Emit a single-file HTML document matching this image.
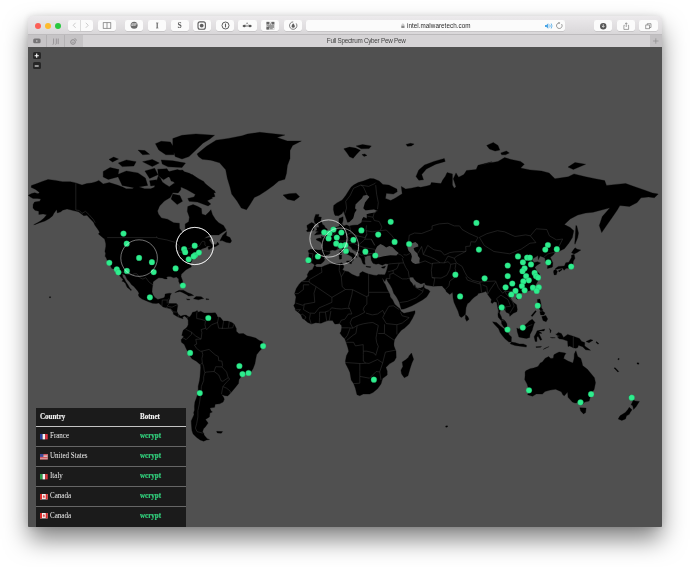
<!DOCTYPE html>
<html><head><meta charset="utf-8">
<style>
html,body{margin:0;padding:0;width:690px;height:567px;overflow:hidden;background:#fff;font-family:"Liberation Sans",sans-serif;}
.a{position:absolute;}
.shadow{left:28px;top:15.5px;width:634px;height:511.2px;border-radius:4px 4px 1.5px 1.5px;box-shadow:0 13px 24px -1px rgba(0,0,0,0.5),0 0 7px rgba(0,0,0,0.13);background:linear-gradient(#e4e2e4 0,#e4e2e4 31px,#505050 31px);}
.toolbar{left:28px;top:15.5px;width:634px;height:18.8px;background:linear-gradient(#eceaec,#d9d7d9);border-radius:4px 4px 0 0;}
.tbline{left:28px;top:34.1px;width:634px;height:0.5px;background:#bdbbbd;}
.tabbar{left:28px;top:34.5px;width:634px;height:12px;background:#d6d4d6;}
.pin{top:34.5px;height:12px;background:#c6c4c6;}
.pinsep{top:34.5px;height:12px;width:0.6px;background:#b4b2b4;}
.content{left:28px;top:46.5px;width:634px;height:480.2px;background:#505050;border-radius:0 0 1.5px 1.5px;}
.light{top:22.7px;width:6px;height:6px;border-radius:50%;}
.btn{top:20.2px;height:10.6px;background:#fbfbfb;border-radius:2px;box-shadow:0 0.4px 0.6px rgba(0,0,0,0.18);}
.ico{color:#6a6a6a;font-size:7px;text-align:center;line-height:10.6px;font-weight:bold;}
.title{left:326.8px;top:37.1px;font-size:6.3px;letter-spacing:-0.25px;color:#444;white-space:nowrap;}
.map{position:absolute;left:0;top:0;}
.url{font-size:6.3px;color:#2a2a2a;letter-spacing:0.04px;white-space:nowrap;}

.zb{left:33.3px;width:7.4px;height:7.4px;background:#262626;border-radius:1.5px;}
.tbl{left:35.8px;top:407.9px;width:150.5px;height:118.8px;background:#1b1b1b;}
.hl{left:35.8px;width:150.5px;height:1.1px;background:#c4c4c4;}
.sl{left:35.8px;width:150.5px;height:1.2px;background:#666;}
.th{font-family:"Liberation Serif",serif;font-weight:bold;font-size:8px;color:#f2f2f2;white-space:nowrap;line-height:8px;transform:scaleX(0.875);transform-origin:0 0;-webkit-text-stroke:0.15px #f2f2f2;}
.td{font-family:"Liberation Serif",serif;font-size:8px;color:#f0f0f0;white-space:nowrap;line-height:8px;transform:scaleX(0.875);transform-origin:0 0;}
.tg{font-family:"Liberation Serif",serif;font-weight:bold;font-size:8px;color:#33d37e;white-space:nowrap;line-height:8px;transform:scaleX(0.875);transform-origin:0 0;-webkit-text-stroke:0.2px #33d37e;}
.flag{left:39.9px;width:7.7px;height:5.4px;}
</style></head><body>
<div style="filter:blur(0.4px);position:absolute;left:0;top:0;width:690px;height:567px;">
<div class="a shadow"></div>
<div class="a toolbar"></div>
<div class="a tbline"></div>
<div class="a tabbar"></div>
<div class="a pin" style="left:28px;width:18.3px"></div>
<div class="a pin" style="left:46.8px;width:17.4px"></div>
<div class="a pin" style="left:64.7px;width:18.1px"></div>
<div class="a pinsep" style="left:46.4px"></div>
<div class="a pinsep" style="left:64.3px"></div>
<div class="a pin" style="left:650.4px;width:11.6px;background:#c3c1c3"></div>
<div class="a content"></div>
<!-- traffic lights -->
<div class="a light" style="left:34.8px;background:#fc5f57;"></div>
<div class="a light" style="left:44.9px;background:#fdbb2e;"></div>
<div class="a light" style="left:54.9px;background:#29c840;"></div>
<!-- nav buttons -->
<div class="a btn" style="left:67.7px;width:25.1px;"></div>
<div class="a" style="left:80.4px;top:20.2px;width:0.5px;height:10.6px;background:#dcdcdc"></div>
<svg class="a" style="left:67.7px;top:20.2px" width="26" height="11" viewBox="0 0 26 11"><path d="M7.6 2.8 L5.2 5.3 L7.6 7.8 M17.8 2.8 L20.2 5.3 L17.8 7.8" fill="none" stroke="#b8b8b8" stroke-width="0.7"/></svg>
<div class="a btn" style="left:98.3px;width:17.8px;"></div>
<svg class="a" style="left:98.3px;top:20.2px" width="18" height="11" viewBox="0 0 18 11"><rect x="5.2" y="2.7" width="7.6" height="5.6" fill="none" stroke="#6f6f6f" stroke-width="0.7"/><line x1="9" y1="2.7" x2="9" y2="8.3" stroke="#6f6f6f" stroke-width="0.7"/></svg>
<!-- extension buttons -->
<div class="a btn" style="left:125.1px;width:18.2px;"></div>
<svg class="a" style="left:125.1px;top:20.2px" width="19" height="11" viewBox="0 0 19 11"><circle cx="9.1" cy="5.3" r="3.5" fill="#6b6b6b"/><text x="9.1" y="6.3" font-size="2.6" font-family="Liberation Sans" font-weight="bold" fill="#ddd" text-anchor="middle">ABP</text></svg>
<div class="a btn" style="left:148px;width:17.7px;"></div>
<svg class="a" style="left:148px;top:20.2px" width="18" height="11" viewBox="0 0 18 11"><path d="M9.2 2.9 V8.1" stroke="#666" stroke-width="1.2"/><path d="M8 2.9 H10.4 M8 8.1 H10.4" stroke="#666" stroke-width="0.6"/></svg>
<div class="a btn" style="left:170.8px;width:17.8px;"></div>
<div class="a ico" style="left:170.8px;top:21.1px;width:17.8px;font-family:'Liberation Serif',serif;font-size:7.6px;color:#555">S</div>
<div class="a btn" style="left:193.3px;width:17.4px;"></div>
<svg class="a" style="left:193.3px;top:20.2px" width="18" height="11" viewBox="0 0 18 11"><rect x="5" y="1.9" width="7.4" height="7.4" rx="2" fill="none" stroke="#5e5e5e" stroke-width="1.1"/><circle cx="8.7" cy="5.6" r="1.9" fill="#5e5e5e"/></svg>
<div class="a btn" style="left:215.8px;width:18.1px;"></div>
<svg class="a" style="left:215.8px;top:20.2px" width="19" height="11" viewBox="0 0 19 11"><circle cx="9.5" cy="5.5" r="3.5" fill="none" stroke="#5e5e5e" stroke-width="1"/><path d="M9.5 3.6 V7.4" stroke="#5e5e5e" stroke-width="1.1"/></svg>
<div class="a btn" style="left:238.3px;width:18.4px;"></div>
<svg class="a" style="left:238.3px;top:20.2px" width="19" height="11" viewBox="0 0 19 11"><circle cx="9.1" cy="3.3" r="0.7" fill="#7a7a7a"/><path d="M9.1 3.3 L6.3 6 M9.1 3.3 L12 6" stroke="#999" stroke-width="0.4"/><path d="M4.6 6 H13.8" stroke="#555" stroke-width="0.8"/><circle cx="6.3" cy="6" r="1.3" fill="#555"/><circle cx="12" cy="6" r="1.3" fill="#555"/></svg>
<div class="a btn" style="left:261px;width:17.8px;"></div>
<svg class="a" style="left:261px;top:20.2px" width="18" height="11" viewBox="0 0 18 11"><rect x="5.5" y="1.9" width="7.8" height="7.6" fill="#9a9a9a"/><rect x="5.50" y="1.90" width="1.56" height="1.52" fill="#eaeaea"/><rect x="8.62" y="1.90" width="1.56" height="1.52" fill="#eaeaea"/><rect x="5.50" y="3.42" width="1.56" height="1.52" fill="#eaeaea"/><rect x="7.06" y="3.42" width="1.56" height="1.52" fill="#eaeaea"/><rect x="10.18" y="3.42" width="1.56" height="1.52" fill="#eaeaea"/><rect x="11.74" y="3.42" width="1.56" height="1.52" fill="#eaeaea"/><rect x="5.50" y="6.46" width="1.56" height="1.52" fill="#eaeaea"/><rect x="7.06" y="7.98" width="1.56" height="1.52" fill="#eaeaea"/><rect x="11.74" y="7.98" width="1.56" height="1.52" fill="#eaeaea"/><rect x="5.5" y="1.9" width="2.6" height="2.6" fill="#666"/><rect x="10.7" y="1.9" width="2.6" height="2.6" fill="#666"/><rect x="5.5" y="6.9" width="2.6" height="2.6" fill="#666"/></svg>
<div class="a btn" style="left:283.6px;width:18px;"></div>
<svg class="a" style="left:283.6px;top:20.2px" width="18" height="11" viewBox="0 0 18 11"><path d="M12.2 3.4 A3.7 3.7 0 1 1 9.2 1.9" fill="none" stroke="#5e5e5e" stroke-width="0.8"/><path d="M9.2 3.2 Q11.3 5.6 10.9 6.6 A1.8 1.8 0 0 1 7.5 6.6 Q7.1 5.6 9.2 3.2Z" fill="#5e5e5e"/></svg>
<!-- address bar -->
<div class="a btn" style="left:306px;width:258.6px;"></div>
<svg class="a" style="left:399.5px;top:22.6px" width="6" height="6" viewBox="0 0 6 6"><rect x="1.3" y="2.6" width="3.2" height="2.4" fill="#8a8a8a"/><path d="M2 2.6 V1.8 A0.9 0.9 0 0 1 3.8 1.8 V2.6" fill="none" stroke="#8a8a8a" stroke-width="0.5"/></svg>
<div class="a url" style="left:407px;top:22.2px;">intel.malwaretech.com</div>
<svg class="a" style="left:544px;top:21.5px" width="10" height="8" viewBox="0 0 10 8"><path d="M1 3 H2.4 L4.3 1.3 V6.7 L2.4 5 H1 Z" fill="#4ba6e6"/><path d="M5.7 2.5 Q6.7 4 5.7 5.5 M7.2 1.5 Q8.8 4 7.2 6.5" fill="none" stroke="#4ba6e6" stroke-width="0.8"/></svg>
<svg class="a" style="left:554.5px;top:21.2px" width="9" height="9" viewBox="0 0 9 9"><path d="M6.6 3.1 A2.8 2.8 0 1 1 4.3 1.9" fill="none" stroke="#7a7a7a" stroke-width="0.75"/><path d="M3.6 0.9 L5.3 1.9 L3.7 3.1 Z" fill="#7a7a7a"/></svg>
<!-- right buttons -->
<div class="a btn" style="left:593.9px;width:18.5px;"></div>
<svg class="a" style="left:593.9px;top:20.5px" width="19" height="11" viewBox="0 0 19 11"><circle cx="9.25" cy="5.2" r="3.2" fill="#555"/><path d="M9.25 3.2 V6 M7.9 4.9 L9.25 6.4 L10.6 4.9" fill="none" stroke="#fff" stroke-width="0.7"/></svg>
<div class="a btn" style="left:616.7px;width:18.5px;"></div>
<svg class="a" style="left:616.7px;top:20.5px" width="19" height="11" viewBox="0 0 19 11"><path d="M7.6 4.3 H6.9 V8.4 H11.6 V4.3 H10.9" fill="none" stroke="#666" stroke-width="0.6"/><path d="M9.25 1.8 V6 M8.2 2.9 L9.25 1.8 L10.3 2.9" fill="none" stroke="#666" stroke-width="0.6"/></svg>
<div class="a btn" style="left:639.4px;width:18.4px;"></div>
<svg class="a" style="left:639.4px;top:20.5px" width="19" height="11" viewBox="0 0 19 11"><rect x="6.8" y="4" width="3.8" height="3.8" fill="none" stroke="#666" stroke-width="0.6"/><path d="M8.2 4 V2.7 H12 V6.5 H10.6" fill="none" stroke="#666" stroke-width="0.6"/></svg>
<!-- tab bar -->
<div class="a title">Full Spectrum Cyber Pew Pew</div>
<svg class="a" style="left:28px;top:34.5px" width="55" height="12" viewBox="0 0 55 12"><rect x="5.2" y="3.6" width="7.4" height="4.6" rx="1.5" fill="#767476"/><path d="M8.2 4.9 L10.1 5.9 L8.2 6.9Z" fill="#c8c6c8"/><path d="M25.6 3.5 V8.6 Q25.6 9.4 24.6 9.3 M28.3 3.5 V8.6 Q28.3 9.4 27.4 9.3 M30.2 3.5 V9.2" fill="none" stroke="#8a888a" stroke-width="0.8"/><circle cx="45" cy="7" r="2.3" fill="none" stroke="#8a888a" stroke-width="1"/><circle cx="45" cy="7.2" r="0.7" fill="#8a888a"/><path d="M46.4 3.6 Q48.6 3.7 48.4 5.8" fill="none" stroke="#8a888a" stroke-width="0.7"/></svg>
<svg class="a" style="left:650.4px;top:34.5px" width="12" height="12" viewBox="0 0 12 12"><path d="M5.8 3.3 V8.7 M3.1 6 H8.5" stroke="#8e8c8e" stroke-width="0.7"/></svg>
<svg class="map" width="690" height="567" viewBox="0 0 690 567">
<path d="M28.2 195.3L31.7 193.5L34.7 192.7L38.1 193.8L39.5 192.4L35.6 189.4L31.0 187.3L31.5 185.4L37.0 183.6L42.3 181.4L48.0 179.5L55.5 180.4L62.6 181.7L70.5 181.7L75.8 182.9L82.0 185.1L86.8 183.6L91.7 182.9L96.1 181.7L98.8 180.4L103.2 183.9L109.3 182.6L117.3 185.1L122.6 187.0L126.1 188.8L132.3 188.8L134.9 187.3L138.4 186.7L144.6 188.8L150.8 188.8L154.3 187.3L156.4 182.0L158.2 175.9L160.5 178.2L162.3 182.0L164.9 183.9L169.3 186.7L173.7 183.6L177.2 182.6L180.8 185.1L180.8 189.7L178.1 193.0L172.8 192.7L170.2 197.6L164.4 201.0L159.6 205.9L157.5 211.0L158.4 213.9L161.4 218.0L167.5 219.2L173.7 222.7L179.4 223.2L179.5 228.3L182.5 232.3L185.2 231.1L185.2 223.9L188.7 221.7L189.4 217.2L187.3 211.3L187.8 206.5L193.1 204.6L197.9 206.5L201.4 208.6L201.9 213.9L205.5 215.2L209.0 212.1L210.9 209.7L212.5 214.7L215.5 219.5L218.7 222.7L223.5 225.4L226.3 230.2L223.1 232.1L218.7 234.9L210.8 234.9L206.7 236.7L202.8 239.2L199.1 242.3L203.7 238.5L209.9 237.2L211.1 238.1L209.0 240.1L210.4 242.1L211.6 243.9L216.1 244.8L217.6 242.1L219.1 244.3L216.1 246.3L212.5 247.6L208.8 249.8L207.9 247.6L210.8 245.9L207.2 246.3L206.0 247.4L202.8 248.5L200.7 249.6L199.8 251.7L201.1 253.4L198.6 254.2L196.7 254.7L194.0 255.9L193.8 257.8L192.4 259.5L191.4 261.9L190.5 263.3L191.2 266.0L191.4 267.0L189.2 268.0L186.1 269.7L183.6 271.9L181.3 274.3L181.0 276.6L182.4 280.3L183.2 283.9L182.7 286.3L181.3 286.3L180.2 284.4L178.7 281.4L178.7 279.1L176.4 277.0L173.7 277.8L170.7 276.6L168.4 276.4L166.5 277.0L167.2 278.9L164.9 278.9L162.3 277.9L158.7 277.8L156.1 279.5L153.1 281.8L152.7 285.2L152.2 288.6L152.0 291.9L153.1 294.9L154.8 297.4L157.8 299.4L161.4 298.5L164.0 297.8L164.9 296.2L165.1 294.1L169.3 293.2L171.4 293.4L170.2 295.6L169.8 298.7L168.8 300.5L168.4 303.4L172.0 303.6L176.4 303.6L177.8 305.1L177.2 308.7L176.9 311.3L178.1 314.0L180.8 316.2L183.4 315.3L186.1 315.1L188.2 316.5L189.6 317.0L191.2 314.9L192.6 312.2L195.2 311.7L197.2 310.6L198.4 312.2L200.7 311.2L204.1 313.1L207.8 312.9L211.6 312.9L215.3 312.8L216.9 314.9L217.3 316.7L220.5 317.6L223.1 321.1L227.5 321.1L231.9 322.4L234.2 324.3L236.3 328.5L236.3 331.2L239.0 333.8L243.4 333.5L246.9 335.8L251.3 336.8L255.7 338.1L259.3 340.4L262.4 341.4L263.2 345.0L262.3 348.2L259.3 351.2L256.6 354.8L255.7 359.3L254.9 363.8L253.1 368.4L250.5 372.8L246.0 373.4L241.6 376.0L239.0 379.6L238.5 383.4L235.5 387.2L232.8 390.5L230.2 393.5L227.7 395.9L224.9 395.7L221.5 394.5L223.5 397.1L224.3 399.3L223.1 402.1L219.6 403.8L215.2 404.2L214.6 407.3L209.9 408.1L211.1 411.1L212.4 411.9L209.9 413.0L209.4 416.9L205.5 419.5L208.1 423.1L205.3 426.9L203.5 428.8L202.6 431.8L203.9 433.7L204.1 435.1L207.2 438.7L209.5 439.5L206.4 440.0L203.7 441.2L200.2 440.0L196.7 437.5L193.1 433.9L191.9 430.4L191.4 424.7L191.2 420.9L194.0 414.7L193.7 412.6L194.5 410.0L194.4 406.3L194.9 402.1L196.5 397.7L198.2 392.1L198.2 386.3L199.5 380.5L200.0 376.7L200.7 367.8L200.5 364.7L198.6 363.3L196.7 361.4L191.9 358.7L189.9 355.8L188.4 353.0L186.1 348.5L184.3 344.4L181.5 342.3L181.1 339.8L182.9 337.7L183.6 336.1L181.8 335.6L182.5 332.6L183.2 330.3L185.5 328.5L187.1 327.0L188.2 324.7L188.2 320.2L187.3 318.5L186.1 317.2L184.3 316.0L182.5 317.6L183.1 318.8L180.8 318.1L178.1 317.0L177.1 316.5L173.4 314.2L173.2 312.2L170.5 308.8L168.4 308.3L166.1 307.8L163.1 306.9L161.7 305.8L158.7 303.1L156.1 303.6L152.6 303.3L148.5 301.8L145.5 300.4L142.0 299.1L139.3 296.9L138.3 295.0L139.0 293.2L137.9 291.2L136.0 288.9L133.7 286.3L131.6 284.8L129.6 282.0L127.2 279.5L125.0 274.9L122.2 273.7L122.9 277.2L124.3 278.7L125.7 281.6L127.9 284.8L129.8 288.2L131.6 289.9L130.7 290.6L130.0 289.5L127.3 287.4L126.6 286.3L125.4 283.3L123.3 281.4L121.9 281.2L123.1 279.7L120.3 276.6L118.7 273.7L117.8 272.1L115.9 269.9L114.6 269.2L111.8 268.4L109.7 264.3L108.5 262.1L107.2 260.3L106.2 257.8L105.1 256.3L105.6 253.4L104.9 251.3L105.8 246.5L105.8 243.7L104.6 239.0L103.2 237.9L98.4 233.9L99.6 232.6L98.8 230.7L94.9 225.2L93.5 222.2L89.9 218.5L86.9 215.2L83.8 215.7L78.5 211.8L73.2 210.5L67.0 208.9L62.6 210.2L60.8 211.8L57.3 212.9L56.8 209.4L59.1 207.6L56.1 210.2L53.8 213.4L52.5 215.9L49.4 218.5L45.0 221.0L39.7 222.7L35.3 224.4L33.7 224.7L37.0 223.0L40.5 221.0L44.1 218.0L46.7 214.7L43.2 213.9L38.8 214.4L38.8 211.3L34.9 210.2L33.0 208.1L33.1 204.6L34.5 202.1L39.7 201.3L40.9 199.0L37.4 198.4L33.0 198.4L30.8 197.3ZM208.1 205.9L202.8 204.0L197.5 202.1L189.1 201.3L187.8 198.4L194.0 197.0L196.3 192.7L194.0 190.3L186.1 188.2L181.7 183.3L176.4 182.0L171.1 181.1L168.4 172.9L174.6 171.2L182.5 169.9L186.1 173.6L192.2 174.6L198.4 178.8L203.7 181.4L208.1 188.2L214.3 190.6L215.5 192.7L207.2 193.5L212.5 198.2L207.2 200.7L210.8 204.0ZM172.8 194.1L179.9 195.6L182.5 201.3L177.2 204.6L171.1 199.0ZM219.9 240.8L222.6 235.6L226.6 231.6L226.3 235.8L230.0 237.6L231.6 241.0L230.2 243.0L226.1 242.3L222.2 240.6ZM174.8 292.5L179.0 290.2L183.4 290.2L187.8 292.7L191.4 294.1L193.7 295.6L188.4 296.1L187.3 294.9L182.5 292.5L179.9 291.4L176.4 292.3ZM193.5 298.7L196.1 296.5L201.1 296.7L203.7 298.5L201.1 299.1L198.4 299.8L194.9 299.1ZM186.4 298.9L189.9 299.3L189.9 299.8L187.8 300.0ZM206.0 298.7L208.8 298.9L208.8 299.6L206.0 299.6ZM314.7 265.4L313.4 263.7L311.5 262.9L308.8 263.3L309.0 259.9L307.8 258.4L308.8 256.8L309.0 253.0L308.1 250.8L310.4 249.3L314.3 249.6L317.8 250.0L321.4 250.0L322.4 247.4L322.4 245.0L320.7 241.9L316.6 240.1L316.2 239.0L319.2 238.1L321.7 238.5L321.2 236.0L322.8 236.9L324.9 236.5L327.4 234.9L328.9 232.8L331.6 232.1L332.7 229.5L333.9 227.6L336.9 227.1L339.7 226.1L338.8 222.0L339.0 218.5L343.1 216.7L343.1 220.5L342.0 223.9L343.9 225.9L346.6 224.7L349.2 226.1L352.8 225.2L357.7 224.9L359.8 223.7L361.9 222.0L361.6 218.5L363.3 217.0L366.9 218.5L366.9 214.7L366.0 212.9L368.1 212.1L373.9 212.1L378.0 211.0L373.9 209.2L368.6 210.0L364.2 210.8L362.3 208.6L362.3 204.0L365.1 200.1L369.5 197.0L366.9 194.7L363.3 195.6L361.6 198.4L358.1 201.8L355.4 204.6L354.9 208.4L357.5 210.8L357.2 212.6L354.2 215.4L353.6 218.5L352.6 220.7L349.8 222.2L347.3 222.2L346.9 220.5L345.5 216.7L344.3 213.4L343.2 211.0L342.2 213.4L338.6 215.7L335.1 215.4L334.2 213.4L333.4 209.4L333.7 205.4L336.9 202.9L342.2 199.9L345.7 195.6L348.4 191.2L351.0 187.3L353.6 185.1L358.1 182.6L363.3 181.1L370.0 178.5L373.9 178.8L379.2 181.1L382.9 184.5L388.9 185.1L396.9 189.1L397.2 191.8L393.3 194.1L386.3 193.3L385.4 198.4L390.7 200.4L395.1 198.2L402.2 193.8L401.3 186.4L405.7 189.1L411.0 188.2L418.0 186.7L420.7 187.3L426.8 186.0L430.4 185.1L431.4 182.6L441.0 183.6L442.7 180.1L445.4 176.2L447.1 172.6L452.4 173.9L452.4 185.1L454.2 188.2L456.0 186.7L453.3 178.8L456.0 172.9L458.6 177.2L463.9 174.6L466.5 170.5L476.2 169.5L478.0 165.3L492.1 161.8L479.1 166.1L488.5 163.3L498.0 161.4L504.6 157.6L511.2 159.5L520.6 161.4L524.3 164.2L520.6 168.0L530.0 169.9L541.5 171.0L549.1 173.0L554.9 178.7L568.3 176.8L574.0 173.9L585.5 176.8L595.0 178.7L604.6 180.6L606.5 185.4L616.1 184.4L625.7 183.5L633.3 186.3L644.8 190.2L652.4 193.0L658.2 194.0L654.4 197.8L648.6 196.9L641.0 197.8L637.1 202.6L629.5 206.4L619.9 205.5L619.9 205.5L617.1 210.3L612.3 217.3L606.5 225.6L601.7 232.6L599.3 225.6L602.3 216.6L610.0 207.8L593.1 212.2L585.5 213.1L577.8 215.0L570.2 218.9L564.4 224.6L570.2 227.5L573.8 230.7L572.4 237.6L568.8 243.2L564.4 248.7L559.1 251.3L557.2 250.6L555.1 252.3L553.3 255.1L550.3 257.2L552.8 262.7L552.6 266.4L552.1 267.2L548.6 268.2L547.3 268.4L547.7 265.4L548.2 262.1L545.4 261.5L545.0 258.2L543.8 257.4L540.1 256.1L538.3 259.7L538.0 255.5L532.7 258.8L532.3 260.7L534.3 262.5L537.4 261.7L540.6 262.9L536.7 265.4L534.8 267.6L537.1 271.3L539.6 273.9L538.9 276.2L539.7 277.6L537.6 281.4L535.3 285.8L532.7 287.8L530.0 290.4L525.6 291.7L522.1 292.8L519.5 294.1L518.9 295.4L518.0 293.2L515.9 293.0L513.3 294.5L511.5 296.9L510.8 298.7L513.3 302.3L516.5 304.7L517.3 309.6L516.8 311.7L513.3 313.3L509.8 316.3L509.4 313.7L506.2 312.2L505.0 310.1L502.5 307.9L501.8 307.8L500.8 309.2L499.5 313.1L501.3 316.7L502.0 319.3L503.6 319.7L505.0 320.8L506.9 323.8L507.1 326.8L508.3 329.2L507.1 329.4L503.6 326.8L501.6 323.8L501.5 321.1L498.3 317.2L497.9 314.9L498.3 310.4L496.9 303.6L496.7 302.3L494.2 301.8L492.1 303.6L490.9 302.3L491.4 299.6L489.5 296.9L487.7 294.5L486.8 292.7L485.9 291.2L484.2 292.1L481.5 292.7L478.0 293.6L477.6 295.0L474.5 296.9L471.8 299.6L469.5 302.2L467.4 303.8L466.0 307.8L465.5 313.5L464.4 315.3L462.5 316.7L461.2 317.4L459.5 316.0L458.1 311.3L456.1 306.9L454.0 302.3L453.0 297.8L452.8 294.1L452.4 292.3L449.8 294.5L446.3 291.7L445.7 289.9L443.3 287.6L442.2 285.9L437.4 286.1L433.2 286.3L428.3 285.6L425.6 285.0L424.4 282.7L421.0 283.9L416.3 281.4L414.1 279.1L413.1 277.2L410.1 277.2L409.2 278.1L410.1 281.0L412.0 283.1L414.1 286.7L414.9 284.6L415.6 287.6L418.0 288.2L420.7 288.0L423.3 286.7L423.8 285.4L424.0 284.4L424.2 287.8L426.0 288.9L428.3 289.7L430.0 291.4L427.9 295.0L426.5 297.1L422.4 300.0L416.6 303.3L411.9 305.8L406.6 307.9L403.9 309.0L401.3 309.2L399.9 304.5L399.3 302.3L396.5 296.9L393.7 293.2L392.1 288.6L390.3 285.2L387.7 281.4L386.1 278.1L384.9 281.6L382.0 277.4L381.5 274.7L384.9 274.7L386.3 271.5L387.2 268.4L387.9 265.6L388.4 264.1L385.4 263.7L382.4 265.2L378.5 263.7L376.0 264.3L373.0 263.3L371.3 260.3L370.9 257.2L370.8 255.9L370.4 255.3L366.9 255.7L366.0 256.8L364.4 256.1L364.9 258.6L364.8 261.7L365.3 264.3L363.9 264.3L362.8 263.3L361.9 260.7L361.1 258.6L358.8 256.3L358.9 253.4L357.2 251.9L352.8 249.8L351.4 247.6L348.5 245.2L346.2 245.7L346.6 248.3L348.5 249.8L350.1 252.6L353.1 253.2L354.5 255.1L357.2 257.0L357.0 257.6L354.7 256.1L353.6 259.2L352.9 261.3L352.1 260.9L352.4 257.2L349.8 255.5L346.6 254.0L343.9 251.9L343.1 249.8L340.4 247.8L337.8 249.1L335.1 250.6L332.5 250.0L329.8 250.8L330.2 253.2L328.1 254.7L326.1 255.1L324.0 258.2L324.9 259.7L323.3 262.1L320.8 263.9L316.8 263.9ZM315.0 265.6L316.6 267.0L320.1 267.0L321.9 267.0L324.5 265.8L329.8 263.7L334.2 263.9L339.5 263.5L342.0 262.7L343.1 264.3L343.9 267.0L342.5 269.7L344.8 270.9L348.4 271.7L351.9 274.3L357.2 276.6L359.5 276.2L359.8 273.3L362.5 271.5L366.0 273.1L368.6 274.1L373.9 275.2L376.6 275.4L378.3 274.5L381.5 274.7L382.0 277.4L383.6 282.0L385.4 284.8L387.3 289.5L389.8 294.1L390.3 296.9L392.5 299.6L394.7 304.2L397.7 306.9L399.9 308.7L400.9 311.3L403.9 313.3L411.0 311.7L415.0 310.8L415.0 313.1L412.4 318.5L409.2 323.8L404.4 328.2L401.3 330.3L397.7 334.7L394.4 339.7L393.9 343.7L394.0 345.9L396.0 351.2L396.2 357.5L394.2 361.1L389.5 363.8L385.9 367.5L387.2 371.1L387.2 374.9L382.6 378.6L381.0 383.9L377.5 388.8L373.0 392.5L369.7 394.1L363.3 394.1L359.8 395.7L357.0 394.7L356.3 392.1L355.4 388.2L353.6 383.6L351.2 380.1L349.9 372.4L348.5 369.3L345.7 363.8L345.4 361.1L346.4 355.7L348.7 351.2L347.8 347.6L346.1 342.3L344.8 338.8L342.2 336.3L339.9 333.1L340.9 331.7L341.8 327.8L341.5 325.5L339.5 323.6L336.9 323.9L334.8 324.1L332.5 320.6L328.1 320.6L324.5 321.8L321.0 323.2L315.7 322.7L311.3 324.1L307.8 322.4L304.6 319.7L302.5 318.5L300.7 314.4L298.1 312.2L295.1 309.9L295.3 308.7L293.7 305.6L294.9 303.8L295.4 300.5L296.0 296.9L294.6 293.6L296.3 288.6L299.0 284.4L301.6 281.6L305.1 279.7L307.6 276.4L307.3 274.5L309.5 270.7L312.5 269.4L313.4 267.4L314.3 265.8ZM525.8 370.8L530.0 368.7L533.6 368.0L538.0 366.5L540.3 362.9L542.4 362.0L545.0 358.4L548.6 356.6L550.7 358.4L553.3 358.2L553.9 354.8L556.5 353.3L559.1 352.1L565.3 353.0L565.8 353.5L564.4 355.7L563.6 358.4L568.0 361.1L572.9 362.9L574.1 358.4L574.3 353.9L575.9 350.7L577.7 356.6L580.8 358.4L582.1 362.9L582.6 365.6L587.4 369.3L590.5 373.0L594.4 377.7L595.5 382.8L594.2 389.2L591.2 393.9L589.1 401.1L584.7 402.1L582.6 404.4L579.4 402.5L575.0 403.0L572.4 402.1L570.6 400.1L568.0 397.3L567.6 392.1L564.4 395.7L563.0 395.1L561.3 391.7L555.6 389.2L550.3 390.1L545.0 391.5L542.4 394.1L536.2 393.9L532.5 396.3L527.6 394.7L528.6 392.7L528.6 389.2L527.2 384.3L524.7 379.6L525.1 375.8L525.1 372.1ZM316.6 232.6L318.9 232.1L315.4 231.1L317.1 230.0L316.6 227.6L319.2 227.3L318.7 225.4L318.4 223.7L316.1 223.9L314.7 222.7L314.0 219.7L314.7 217.2L315.7 214.4L319.1 214.4L318.4 216.7L321.4 217.2L320.7 220.2L321.7 222.0L322.4 224.2L324.4 225.7L325.1 227.6L327.5 229.3L325.9 231.4L327.0 232.6L322.8 233.7L318.4 234.6L314.5 235.1ZM313.4 230.2L310.4 231.4L307.3 231.8L306.4 230.7L307.8 229.3L307.1 227.3L306.9 225.4L309.5 223.7L311.7 222.5L314.8 223.9L313.8 226.1L314.0 230.2ZM568.0 167.1L575.0 162.5L585.6 164.3L573.3 169.5ZM574.7 243.2L575.0 239.9L575.4 233.0L575.9 225.4L576.8 225.9L578.5 233.0L577.7 237.6L575.0 244.3ZM574.1 254.5L575.0 258.2L573.3 261.3L572.9 265.4L571.1 267.4L569.4 268.2L566.2 268.2L564.1 270.3L562.7 268.2L559.1 268.8L555.6 269.4L555.4 268.6L558.3 266.4L564.4 266.0L565.8 262.7L568.8 262.3L571.5 257.6L571.5 255.1ZM553.9 270.3L555.6 269.6L557.4 271.3L556.3 274.7L554.2 274.9L553.5 271.9ZM558.3 270.7L561.8 269.0L562.1 269.7L559.1 271.9ZM539.6 286.5L538.9 291.0L537.6 292.5L536.4 290.4L537.1 287.6ZM516.1 297.4L518.9 295.8L520.3 296.7L517.7 299.3L516.3 298.7ZM518.6 328.7L521.4 327.1L525.3 324.7L527.4 323.1L529.2 321.1L532.3 319.3L535.0 322.5L534.1 323.8L532.7 328.2L532.2 330.3L530.0 334.4L529.7 337.5L526.5 338.4L522.1 337.7L518.9 337.0L517.3 331.7L516.8 328.2ZM492.6 321.8L496.5 322.5L500.9 326.4L503.6 328.5L507.6 330.8L508.9 334.4L511.5 337.0L511.2 342.0L508.9 342.1L505.0 338.8L502.7 336.1L500.1 332.6L498.6 328.7L496.5 326.6L493.9 323.8ZM510.1 343.7L511.5 342.1L515.6 342.8L519.3 343.9L523.3 343.9L526.5 345.3L526.3 347.1L520.3 346.2L515.0 345.5L512.2 344.6ZM534.1 336.7L536.2 333.1L537.1 330.7L544.1 331.0L544.7 329.1L538.3 330.8L542.0 333.3L539.0 333.5L541.9 339.7L540.3 340.2L538.2 336.5L536.9 336.8L536.9 341.6L535.2 341.4ZM556.0 334.4L558.3 332.4L561.3 333.5L563.6 337.5L567.6 334.4L573.3 336.3L579.4 338.4L581.7 341.4L584.7 342.5L584.7 345.9L588.2 348.5L590.5 350.3L585.6 349.8L582.6 346.7L578.5 345.3L577.7 347.6L575.9 348.2L573.3 347.8L569.7 346.0L568.0 346.6L567.6 341.1L562.7 339.3L559.1 338.8L557.4 336.8L560.0 336.1L557.4 335.6L555.6 334.2ZM465.5 314.4L467.9 316.7L469.0 319.3L466.7 321.3L465.3 318.5ZM411.5 353.0L413.6 359.3L411.9 362.9L410.1 368.4L408.0 375.8L404.3 377.7L401.6 373.9L400.9 370.2L402.9 366.5L402.2 362.0L405.7 359.8L408.3 357.5L409.2 355.7ZM629.2 395.1L632.3 398.1L634.8 400.9L639.4 401.5L637.6 404.2L636.4 406.3L633.6 409.4L632.7 405.8L631.1 404.8L632.9 401.1ZM629.2 407.3L632.0 409.8L630.1 412.6L629.3 414.3L626.5 415.8L625.5 418.9L621.8 420.4L618.2 419.1L620.0 415.8L625.3 412.6L627.9 409.4ZM579.8 407.7L586.1 408.1L585.6 412.6L583.5 413.9L580.7 410.9ZM346.4 261.1L352.1 260.7L351.2 263.9L346.8 262.1ZM339.0 255.1L341.8 254.9L341.5 259.0L339.4 259.2ZM339.7 251.1L341.3 250.8L341.3 254.0L340.1 254.0ZM366.0 266.2L370.9 266.8L370.4 267.4L366.2 267.0ZM381.5 267.2L385.6 266.0L384.3 268.2L381.9 268.0ZM545.0 348.2L549.1 346.6L543.3 349.4ZM535.9 346.7L541.5 346.4L540.6 347.3L536.2 347.5ZM550.3 337.4L555.3 337.7L552.1 338.1ZM549.4 328.5L551.2 330.8L550.3 333.1L550.0 330.3ZM197.0 154.1L206.5 146.3L216.1 140.2L228.3 138.4L242.2 135.8L247.4 134.1L259.6 132.3L284.8 135.0L277.0 137.6L287.4 141.0L301.3 141.0L292.6 145.4L290.0 150.6L290.0 158.4L287.4 165.4L286.5 173.2L284.8 179.3L278.7 181.0L273.5 185.4L266.5 190.6L259.6 195.0L254.3 197.6L250.0 204.5L246.5 209.7L241.3 208.0L237.0 201.0L231.7 194.1L230.0 187.1L227.4 178.4L225.7 169.7L219.6 162.8L210.9 160.2L202.2 159.3L198.7 156.7ZM283.0 195.0L289.1 193.7L296.1 193.2L299.6 196.7L294.3 200.7L287.4 199.3ZM416.0 176.4L418.8 169.9L424.5 165.1L433.9 161.4L444.3 158.5L445.2 161.4L435.8 164.2L426.4 168.9L421.7 174.6L423.5 179.8L418.8 180.2ZM486.7 145.4L493.3 142.5L498.0 145.4L499.8 150.1L495.1 151.0L489.5 149.1ZM500.8 152.9L506.4 151.0L509.3 152.9L505.5 154.8L501.7 154.8ZM406.0 144.4L410.4 143.3L414.1 144.0L411.3 145.9L407.5 146.3ZM49.4 296.8L50.6 296.7L50.6 297.7L49.5 297.8ZM586.0 341.5L590.5 339.6L593.0 340.2L589.0 342.8ZM596.5 341.6L598.8 343.5L598.0 344.2L596.0 342.5ZM614.0 368.0L615.2 367.8L618.8 371.5L617.8 372.0ZM618.0 358.5L619.2 358.6L619.0 359.8L617.9 359.6ZM637.2 362.8L638.9 362.9L638.8 364.2L637.0 364.0ZM571.5 252.8L573.3 250.1L575.1 247.8L577.2 249.3L580.8 250.1L577.2 252.4L574.1 253.9ZM537.4 299.5L539.9 299.1L541.0 303.8L541.4 307.8L543.1 310.2L540.7 310.9L538.6 307.8L537.5 303.8ZM539.8 311.7L542.6 310.9L545.0 312.9L543.9 314.9L540.7 314.9ZM541.8 316.5L545.8 315.4L547.7 318.9L546.1 321.8L543.0 320.5ZM531.1 315.7L535.5 310.6L536.3 311.4L532.3 316.5ZM216.6 431.3L222.6 431.6L221.3 433.2L217.3 433.0ZM445.6 426.0L447.4 425.8L447.6 426.9L445.9 427.2ZM343.8 148.8L349.6 147.1L355.4 148.1L360.4 150.3L356.8 153.9L353.2 158.3L349.6 156.8L346.7 152.5ZM356.1 145.9L362.6 144.5L371.3 145.9L369.1 148.6L361.2 148.8ZM361.9 154.6L364.8 153.9L367.0 155.4L364.1 156.4ZM172.8 138.6L182.0 135.3L195.9 133.9L214.5 135.3L209.9 139.0L202.9 143.2L195.9 150.1L189.0 156.6L182.0 159.0L175.1 156.6L172.8 147.8ZM155.4 143.7L161.2 141.3L170.4 142.0L173.9 147.8L173.9 154.8L165.8 154.8L158.8 150.1ZM161.2 159.9L172.8 160.8L185.5 163.1L182.0 167.5L168.1 166.8L162.3 164.1ZM103.2 171.5L110.1 167.5L119.0 169.6L117.6 177.0L108.3 179.4L103.2 177.0ZM117.1 174.7L126.4 171.0L138.0 172.9L145.4 178.0L147.7 185.4L133.8 187.7L122.2 185.4ZM118.3 163.1L126.4 159.9L136.1 161.7L133.8 166.1L122.2 166.6ZM109.0 159.4L113.6 157.1L118.5 159.0L112.5 162.0ZM142.6 161.7L152.3 159.4L159.3 162.9L152.3 166.6ZM138.0 150.1L144.9 150.6L149.6 154.3L142.6 154.8ZM144.9 171.0L154.7 168.2L157.9 174.7L149.6 178.4ZM157.7 169.2L167.0 168.7L170.9 175.2L163.5 179.8L158.4 175.7ZM166.3 172.2L177.4 169.6L189.4 173.3L201.0 180.3L212.6 189.6L215.0 196.5L205.2 199.3L195.9 194.7L186.7 189.6L177.4 185.4L170.9 179.4ZM149.6 180.8L156.5 179.8L157.7 184.9L150.7 186.1Z" fill="#000" stroke="#000" stroke-width="0.3" stroke-linejoin="round"/>
<path d="M408.9 245.0L411.9 243.2L415.4 242.1L418.0 244.3L418.4 246.5L415.0 247.6L413.6 248.3L414.5 250.8L417.5 253.4L418.0 256.1L419.8 258.2L419.4 261.3L419.8 263.3L415.4 263.9L412.7 262.7L411.0 260.7L411.9 256.5L411.0 253.4L408.5 250.8L407.4 247.6ZM367.9 195.5L369.1 197.2L365.0 202.5L363.3 208.3L365.6 210.6L374.9 210.6L376.0 212.3L369.1 213.5L364.9 214.7L362.6 218.2L360.3 222.8L354.5 224.0L348.7 225.4L345.2 224.0L348.7 222.8L353.3 218.2L354.6 213.0L355.7 211.2L359.2 205.9L362.1 200.7L365.0 196.1ZM374.8 250.7L377.1 246.6L380.4 243.9L383.5 245.6L386.2 247.6L389.3 245.9L392.3 247.1L395.9 250.7L398.7 253.0L396.4 255.4L390.3 255.2L383.7 256.2L378.6 257.4L375.6 256.2Z" fill="#505050"/>
<path d="M107.2 237.6L156.6 237.6L156.6 236.7L157.7 238.3L164.0 239.4L166.7 239.9L175.0 242.3L177.2 244.3L179.2 245.9L179.0 250.8L178.0 253.0L185.2 251.3L183.8 250.2L189.9 248.3L192.8 246.5L198.4 246.5L199.8 245.4L201.1 242.8L202.5 241.2L204.2 241.5L204.9 241.9L204.9 245.0L206.2 246.3M75.8 183.3L75.8 210.0L79.3 210.5L82.0 213.4L85.5 211.3L89.1 214.7L93.5 219.7L95.2 222.7M118.0 272.3L122.2 271.9L128.7 274.7L133.7 274.7L133.7 273.7L136.7 273.7L140.2 277.9L142.9 279.1L145.7 277.6L149.0 282.0L153.1 285.0M161.9 306.0L162.3 300.0L167.2 300.0L168.8 298.7M167.2 300.0L167.2 303.4M167.0 306.1L169.0 303.8M166.1 307.8L168.4 306.5L172.0 307.2L176.4 305.1L177.8 305.1M170.5 308.8L173.7 311.9L176.9 312.2M178.1 317.0L178.5 314.7M188.2 316.5L187.3 318.5M197.2 311.3L196.7 314.0L196.7 318.5L201.1 319.3L205.5 320.8L204.9 324.7L205.8 328.2L201.1 329.6L201.9 332.6L201.1 339.1M201.1 339.1L195.8 336.1L191.4 332.1L187.8 330.3L185.5 329.1M218.7 316.7L217.5 322.5L211.6 324.7L206.7 329.6L205.8 328.2M223.6 321.1L222.2 329.1M229.3 321.6L228.4 327.7M217.5 322.5L218.7 328.2L225.8 328.4L232.8 327.8L233.7 324.3M182.9 337.7L186.1 339.7L191.4 334.4L191.7 332.1M201.1 339.1L195.8 339.3L196.7 344.1L194.4 345.0L196.7 348.5L200.2 351.2L201.9 351.2L202.8 354.8L201.9 358.4L202.3 362.9L200.5 364.5M201.9 351.2L209.0 349.4L215.2 354.8L218.3 356.6L218.7 360.7L221.9 361.1L222.6 365.6L221.9 366.9M202.3 362.9L203.7 366.5L204.2 370.2L204.9 372.6L206.4 372.1L210.8 371.7L214.1 371.5L215.7 366.7L221.9 366.9M204.9 372.6L203.7 376.7L203.7 380.5L201.4 386.3L201.1 392.1L200.2 398.1L199.3 404.2L197.9 410.5L197.9 416.9L196.7 423.5L195.4 428.1L197.0 431.6L202.8 433.2M221.9 366.9L226.6 372.1L228.2 377.7L222.9 381.3L221.2 380.9L218.7 374.9L214.1 371.5M228.2 377.9L229.8 379.0L226.3 382.4L222.9 386.6L226.6 388.2L230.2 391.1L230.3 393.5M222.9 386.6L222.2 390.1L221.5 394.1M321.4 267.4L321.9 272.3L318.4 274.3L309.2 279.7L309.2 282.3L316.1 286.7L331.9 297.4L345.5 289.5L342.2 286.7L341.3 276.8L339.2 270.3L339.5 263.5M341.3 276.8L344.8 271.1M309.2 281.6L301.3 281.6M309.2 284.8L303.4 284.8L303.4 289.5L298.1 293.6L294.6 293.6M316.1 286.7L314.0 293.2L314.8 302.3L304.3 304.2L303.0 305.4L295.4 302.9M368.6 274.1L368.6 292.3L389.5 292.3M368.6 292.3L368.6 296.0L366.9 296.0L366.9 296.9L352.6 289.7L345.5 289.5M331.9 297.4L331.9 302.3L325.4 305.2L319.2 307.8L314.8 313.3L309.5 313.1L303.4 309.6L304.3 304.2M329.5 310.4L331.6 307.8L336.9 308.7L341.5 309.0L346.6 308.3L349.6 308.5M352.6 289.7L351.9 294.5L348.5 306.9L349.6 308.5M366.9 296.9L366.9 304.2L364.2 306.9L363.3 309.6L364.8 312.2L358.1 315.8L351.9 318.5L350.1 322.9L352.8 328.2L348.4 327.8L341.8 327.8M349.6 308.5L350.1 309.6L351.9 314.0L348.4 314.0L344.8 319.3L341.3 320.2L339.5 323.6M366.0 313.1L372.2 314.9L377.5 314.0L382.7 310.4L384.5 314.0M389.5 292.3L392.5 299.6M388.9 306.3L385.4 312.2L382.7 317.6L386.3 323.6L396.9 324.7L402.2 323.1L409.2 317.6L402.2 315.8L400.4 312.2M388.9 306.3L393.3 305.8L399.3 309.6M352.8 328.2L357.2 325.5L363.3 323.8L368.6 322.9L372.9 322.5L378.3 325.5L376.6 334.4L376.0 337.9L376.6 342.3L378.3 346.4M357.2 325.5L355.9 333.5L353.1 335.2L346.6 340.5M344.8 338.8L347.5 335.2L350.1 328.2M346.1 342.3L353.6 342.3L355.4 345.9L363.2 344.6L363.3 351.2L366.9 351.2L373.9 353.0L375.7 355.3L378.3 346.4M363.3 351.2L363.3 354.8L363.3 361.1L365.8 363.1L361.2 363.6L345.4 362.5M359.8 363.6L359.8 371.1L359.8 376.4L359.8 383.2L353.6 383.6M359.8 376.4L369.5 378.2L376.2 371.5L379.7 371.9L381.0 380.1M369.0 363.4L377.5 359.5L382.7 362.9L379.7 371.9M365.8 363.1L369.0 363.4M384.3 333.5L393.9 340.0M396.9 334.4L396.9 324.7M384.5 324.3L384.5 330.0L384.3 333.5L378.3 333.5M395.8 350.1L385.4 352.1L382.7 362.9M319.2 322.9L319.6 317.6L319.6 312.2L324.5 312.2L328.8 310.8M326.7 320.9L325.4 312.2M329.3 320.4L330.9 311.0M311.3 324.1L309.5 318.5L310.4 313.7M304.6 319.5L306.0 317.0L302.5 314.2L301.1 314.9M298.1 312.2L300.4 309.6L295.1 309.9M321.4 250.0L330.2 252.1M328.9 232.8L331.9 235.3L334.8 236.5L339.0 237.6L337.9 240.8L335.3 243.9L336.9 245.9L337.8 249.1M308.8 253.2L313.1 253.8L312.2 258.0L311.5 262.9M349.6 226.1L350.3 229.5L351.0 233.0L346.1 234.9L348.9 238.3L347.5 241.0L341.5 241.0L337.9 240.8M341.3 223.9L342.0 223.9M337.2 227.6L335.1 233.5L331.9 235.3M366.5 225.4L366.0 229.5L366.9 234.2L364.8 237.6L357.2 235.8L351.0 233.0M361.6 221.0L371.3 221.5M367.4 216.2L373.0 217.2M374.3 212.3L373.0 217.2L374.3 220.5L379.2 221.5L381.9 227.1L380.1 230.7L372.2 231.8L366.0 230.7M366.9 234.2L364.8 239.2L371.3 239.2L374.8 245.4M380.1 230.7L386.3 230.0L391.6 235.3L395.1 239.9L391.9 241.9M377.5 209.2L378.3 202.7L376.6 194.1L375.7 185.1M366.9 194.7L363.3 186.7L360.7 185.1M344.8 213.4L346.6 208.1L345.7 201.3L350.1 195.6L353.6 188.2L360.7 185.1L368.6 186.4L374.8 183.6L375.7 182.6M336.9 244.6L343.1 243.2L346.6 242.1L348.7 243.2M347.5 241.0L354.5 239.9L357.2 235.8M354.5 239.9L353.6 243.2L348.7 243.2M353.6 243.2L358.1 245.4L364.2 240.1L364.8 239.2M358.1 245.4L364.2 247.6L374.8 249.3M364.2 247.6L364.2 254.5L370.9 253.6L373.9 253.2M358.9 253.4L361.2 255.3L365.1 254.5L370.9 253.6M352.8 249.8L358.9 250.8L358.1 245.4M374.8 245.4L371.3 239.2M388.4 264.1L391.6 263.7L399.3 263.1L403.6 262.9L402.2 258.2M397.9 253.8L401.3 255.1L403.6 257.8M403.6 254.7L406.6 255.1L410.1 253.4M399.3 263.1L396.9 268.6L393.0 270.5L393.3 273.3L389.8 274.3L389.8 278.7L386.3 278.3M387.9 271.9L393.0 270.5M393.3 273.3L402.2 278.9L406.6 278.9L409.2 278.1M409.2 277.2L408.3 271.3L405.7 267.4L403.6 262.9M400.0 302.5L407.4 301.4L416.3 297.8L422.6 292.3L423.3 288.6M415.6 287.6L422.4 291.0M432.5 263.3L431.3 270.3L432.0 277.6L434.8 278.3L433.4 286.3M432.0 277.6L441.0 278.1L446.8 275.2L449.8 269.4L450.8 264.3L456.0 263.3M419.8 262.7L425.1 260.9L432.1 264.1L432.5 263.3L440.1 262.7L444.1 262.9L448.0 261.7L450.8 264.3M408.3 244.8L409.2 235.3L414.5 233.0L421.6 233.5L432.1 229.5L432.1 225.9L439.2 223.9L448.0 223.2L454.2 225.9L459.5 225.9L462.1 229.5L469.2 233.5L478.0 237.4M418.0 253.0L421.6 246.5L423.3 254.5L427.7 245.4L433.9 249.8L441.0 251.1L444.5 255.1L449.8 252.6L454.2 251.9L466.0 251.3L465.7 246.5L470.1 246.1L470.9 241.7L475.4 242.1L478.0 237.4M423.3 254.5L430.4 257.2L434.8 259.2L440.1 262.7M444.1 262.9L448.0 256.1L454.2 258.2L456.8 256.1L466.0 251.3M479.4 237.4L486.8 233.7L497.4 230.7L504.5 231.8L515.0 236.5L525.6 234.9L530.4 235.8M479.4 237.4L484.2 245.4L493.9 251.5L509.8 253.8L521.2 249.1L530.0 243.2L535.9 242.6L530.4 235.8M530.4 235.8L536.2 228.8L546.8 229.5L549.4 235.8L556.5 239.9L562.7 239.0L559.1 246.1L555.6 251.3L555.1 252.3M454.2 258.2L456.5 262.9L462.1 266.4L464.8 272.3L467.4 276.8L472.7 280.4L479.8 282.0L486.8 281.4L495.6 281.0L498.3 287.6L502.7 293.2L504.5 291.5L512.4 291.4L515.0 293.2M456.0 263.3L455.1 268.4L456.1 272.3L455.1 277.2L449.8 281.0L448.9 285.8L445.9 288.9M465.8 276.8L467.4 280.1L480.1 284.1L479.8 282.0M480.6 283.9L481.5 292.3M482.4 284.8L486.8 286.7L487.7 294.1M487.7 294.1L490.3 289.5L495.6 282.0M498.3 313.1L499.2 308.7L498.3 302.3L496.5 298.7L500.9 295.2L508.0 299.6L510.6 306.3L505.3 306.9L505.3 310.4M504.5 291.5L508.0 296.0L512.4 301.4L514.2 306.0L509.8 313.1M501.3 320.2L504.5 321.1M545.9 261.3L551.0 260.1M543.8 257.4L547.7 254.0L551.2 253.0L555.1 252.3M517.9 328.4L523.9 329.6L527.4 326.4L532.3 324.5M573.3 336.3L573.3 347.8" fill="none" stroke="#434343" stroke-width="0.45" stroke-linejoin="round"/>
<circle cx="123.5" cy="233.6" r="2.85" fill="#2eee8e" stroke="#22a864" stroke-width="0.3"/><circle cx="126.7" cy="243.7" r="2.85" fill="#2eee8e" stroke="#22a864" stroke-width="0.3"/><circle cx="139.1" cy="257.9" r="2.85" fill="#2eee8e" stroke="#22a864" stroke-width="0.3"/><circle cx="151.9" cy="262.2" r="2.85" fill="#2eee8e" stroke="#22a864" stroke-width="0.3"/><circle cx="109.3" cy="262.8" r="2.85" fill="#2eee8e" stroke="#22a864" stroke-width="0.3"/><circle cx="116.8" cy="269.3" r="2.85" fill="#2eee8e" stroke="#22a864" stroke-width="0.3"/><circle cx="118.4" cy="272.3" r="2.85" fill="#2eee8e" stroke="#22a864" stroke-width="0.3"/><circle cx="126.9" cy="270.9" r="2.85" fill="#2eee8e" stroke="#22a864" stroke-width="0.3"/><circle cx="153.7" cy="272.1" r="2.85" fill="#2eee8e" stroke="#22a864" stroke-width="0.3"/><circle cx="175.6" cy="268.4" r="2.85" fill="#2eee8e" stroke="#22a864" stroke-width="0.3"/><circle cx="182.9" cy="285.5" r="2.85" fill="#2eee8e" stroke="#22a864" stroke-width="0.3"/><circle cx="149.9" cy="297.3" r="2.85" fill="#2eee8e" stroke="#22a864" stroke-width="0.3"/><circle cx="184.1" cy="249.2" r="2.85" fill="#2eee8e" stroke="#22a864" stroke-width="0.3"/><circle cx="185.2" cy="252.2" r="2.85" fill="#2eee8e" stroke="#22a864" stroke-width="0.3"/><circle cx="194.7" cy="245.7" r="2.85" fill="#2eee8e" stroke="#22a864" stroke-width="0.3"/><circle cx="188.7" cy="259.3" r="2.85" fill="#2eee8e" stroke="#22a864" stroke-width="0.3"/><circle cx="195.2" cy="255.0" r="2.85" fill="#2eee8e" stroke="#22a864" stroke-width="0.3"/><circle cx="198.9" cy="252.6" r="2.85" fill="#2eee8e" stroke="#22a864" stroke-width="0.3"/><circle cx="193.6" cy="256.4" r="2.85" fill="#2eee8e" stroke="#22a864" stroke-width="0.3"/><circle cx="208.3" cy="318.0" r="2.85" fill="#2eee8e" stroke="#22a864" stroke-width="0.3"/><circle cx="263.1" cy="346.1" r="2.85" fill="#2eee8e" stroke="#22a864" stroke-width="0.3"/><circle cx="190.1" cy="352.9" r="2.85" fill="#2eee8e" stroke="#22a864" stroke-width="0.3"/><circle cx="239.4" cy="366.0" r="2.85" fill="#2eee8e" stroke="#22a864" stroke-width="0.3"/><circle cx="242.5" cy="374.1" r="2.85" fill="#2eee8e" stroke="#22a864" stroke-width="0.3"/><circle cx="248.5" cy="373.0" r="2.85" fill="#2eee8e" stroke="#22a864" stroke-width="0.3"/><circle cx="199.8" cy="393.1" r="2.85" fill="#2eee8e" stroke="#22a864" stroke-width="0.3"/><circle cx="324.2" cy="232.3" r="2.85" fill="#2eee8e" stroke="#22a864" stroke-width="0.3"/><circle cx="333.4" cy="229.6" r="2.85" fill="#2eee8e" stroke="#22a864" stroke-width="0.3"/><circle cx="329.4" cy="233.4" r="2.85" fill="#2eee8e" stroke="#22a864" stroke-width="0.3"/><circle cx="341.4" cy="232.5" r="2.85" fill="#2eee8e" stroke="#22a864" stroke-width="0.3"/><circle cx="328.6" cy="238.4" r="2.85" fill="#2eee8e" stroke="#22a864" stroke-width="0.3"/><circle cx="336.8" cy="237.6" r="2.85" fill="#2eee8e" stroke="#22a864" stroke-width="0.3"/><circle cx="336.2" cy="243.7" r="2.85" fill="#2eee8e" stroke="#22a864" stroke-width="0.3"/><circle cx="340.8" cy="245.7" r="2.85" fill="#2eee8e" stroke="#22a864" stroke-width="0.3"/><circle cx="345.4" cy="245.1" r="2.85" fill="#2eee8e" stroke="#22a864" stroke-width="0.3"/><circle cx="346.0" cy="251.0" r="2.85" fill="#2eee8e" stroke="#22a864" stroke-width="0.3"/><circle cx="353.4" cy="239.9" r="2.85" fill="#2eee8e" stroke="#22a864" stroke-width="0.3"/><circle cx="361.4" cy="230.4" r="2.85" fill="#2eee8e" stroke="#22a864" stroke-width="0.3"/><circle cx="317.9" cy="256.5" r="2.85" fill="#2eee8e" stroke="#22a864" stroke-width="0.3"/><circle cx="308.4" cy="260.2" r="2.85" fill="#2eee8e" stroke="#22a864" stroke-width="0.3"/><circle cx="390.7" cy="221.8" r="2.85" fill="#2eee8e" stroke="#22a864" stroke-width="0.3"/><circle cx="378.2" cy="234.6" r="2.85" fill="#2eee8e" stroke="#22a864" stroke-width="0.3"/><circle cx="394.6" cy="241.9" r="2.85" fill="#2eee8e" stroke="#22a864" stroke-width="0.3"/><circle cx="409.1" cy="244.0" r="2.85" fill="#2eee8e" stroke="#22a864" stroke-width="0.3"/><circle cx="365.4" cy="251.7" r="2.85" fill="#2eee8e" stroke="#22a864" stroke-width="0.3"/><circle cx="375.3" cy="255.5" r="2.85" fill="#2eee8e" stroke="#22a864" stroke-width="0.3"/><circle cx="476.4" cy="222.9" r="2.85" fill="#2eee8e" stroke="#22a864" stroke-width="0.3"/><circle cx="478.9" cy="249.6" r="2.85" fill="#2eee8e" stroke="#22a864" stroke-width="0.3"/><circle cx="455.4" cy="274.7" r="2.85" fill="#2eee8e" stroke="#22a864" stroke-width="0.3"/><circle cx="460.1" cy="296.4" r="2.85" fill="#2eee8e" stroke="#22a864" stroke-width="0.3"/><circle cx="484.6" cy="278.3" r="2.85" fill="#2eee8e" stroke="#22a864" stroke-width="0.3"/><circle cx="547.9" cy="245.0" r="2.85" fill="#2eee8e" stroke="#22a864" stroke-width="0.3"/><circle cx="545.3" cy="249.6" r="2.85" fill="#2eee8e" stroke="#22a864" stroke-width="0.3"/><circle cx="556.8" cy="249.2" r="2.85" fill="#2eee8e" stroke="#22a864" stroke-width="0.3"/><circle cx="518.0" cy="256.4" r="2.85" fill="#2eee8e" stroke="#22a864" stroke-width="0.3"/><circle cx="527.1" cy="257.7" r="2.85" fill="#2eee8e" stroke="#22a864" stroke-width="0.3"/><circle cx="529.9" cy="257.7" r="2.85" fill="#2eee8e" stroke="#22a864" stroke-width="0.3"/><circle cx="522.9" cy="262.3" r="2.85" fill="#2eee8e" stroke="#22a864" stroke-width="0.3"/><circle cx="531.0" cy="264.4" r="2.85" fill="#2eee8e" stroke="#22a864" stroke-width="0.3"/><circle cx="507.7" cy="265.5" r="2.85" fill="#2eee8e" stroke="#22a864" stroke-width="0.3"/><circle cx="548.3" cy="262.3" r="2.85" fill="#2eee8e" stroke="#22a864" stroke-width="0.3"/><circle cx="524.6" cy="268.3" r="2.85" fill="#2eee8e" stroke="#22a864" stroke-width="0.3"/><circle cx="522.5" cy="271.2" r="2.85" fill="#2eee8e" stroke="#22a864" stroke-width="0.3"/><circle cx="534.6" cy="272.9" r="2.85" fill="#2eee8e" stroke="#22a864" stroke-width="0.3"/><circle cx="536.0" cy="276.1" r="2.85" fill="#2eee8e" stroke="#22a864" stroke-width="0.3"/><circle cx="538.1" cy="277.6" r="2.85" fill="#2eee8e" stroke="#22a864" stroke-width="0.3"/><circle cx="507.7" cy="276.1" r="2.85" fill="#2eee8e" stroke="#22a864" stroke-width="0.3"/><circle cx="526.1" cy="276.1" r="2.85" fill="#2eee8e" stroke="#22a864" stroke-width="0.3"/><circle cx="528.8" cy="280.3" r="2.85" fill="#2eee8e" stroke="#22a864" stroke-width="0.3"/><circle cx="523.3" cy="281.4" r="2.85" fill="#2eee8e" stroke="#22a864" stroke-width="0.3"/><circle cx="512.3" cy="283.5" r="2.85" fill="#2eee8e" stroke="#22a864" stroke-width="0.3"/><circle cx="505.6" cy="287.3" r="2.85" fill="#2eee8e" stroke="#22a864" stroke-width="0.3"/><circle cx="521.9" cy="286.0" r="2.85" fill="#2eee8e" stroke="#22a864" stroke-width="0.3"/><circle cx="532.9" cy="287.7" r="2.85" fill="#2eee8e" stroke="#22a864" stroke-width="0.3"/><circle cx="538.8" cy="287.3" r="2.85" fill="#2eee8e" stroke="#22a864" stroke-width="0.3"/><circle cx="515.5" cy="290.9" r="2.85" fill="#2eee8e" stroke="#22a864" stroke-width="0.3"/><circle cx="524.6" cy="290.3" r="2.85" fill="#2eee8e" stroke="#22a864" stroke-width="0.3"/><circle cx="536.7" cy="290.9" r="2.85" fill="#2eee8e" stroke="#22a864" stroke-width="0.3"/><circle cx="511.3" cy="294.5" r="2.85" fill="#2eee8e" stroke="#22a864" stroke-width="0.3"/><circle cx="519.1" cy="296.2" r="2.85" fill="#2eee8e" stroke="#22a864" stroke-width="0.3"/><circle cx="571.2" cy="266.6" r="2.85" fill="#2eee8e" stroke="#22a864" stroke-width="0.3"/><circle cx="537.7" cy="305.7" r="2.85" fill="#2eee8e" stroke="#22a864" stroke-width="0.3"/><circle cx="501.7" cy="307.4" r="2.85" fill="#2eee8e" stroke="#22a864" stroke-width="0.3"/><circle cx="507.5" cy="329.6" r="2.85" fill="#2eee8e" stroke="#22a864" stroke-width="0.3"/><circle cx="522.8" cy="327.6" r="2.85" fill="#2eee8e" stroke="#22a864" stroke-width="0.3"/><circle cx="373.9" cy="379.7" r="2.85" fill="#2eee8e" stroke="#22a864" stroke-width="0.3"/><circle cx="529.0" cy="390.3" r="2.85" fill="#2eee8e" stroke="#22a864" stroke-width="0.3"/><circle cx="580.5" cy="402.3" r="2.85" fill="#2eee8e" stroke="#22a864" stroke-width="0.3"/><circle cx="591.1" cy="394.2" r="2.85" fill="#2eee8e" stroke="#22a864" stroke-width="0.3"/><circle cx="631.7" cy="397.7" r="2.85" fill="#2eee8e" stroke="#22a864" stroke-width="0.3"/><circle cx="139.1" cy="258.1" r="18.3" fill="none" stroke="#fff" stroke-width="0.8" stroke-opacity="0.55"/><circle cx="194.8" cy="246.0" r="18.6" fill="none" stroke="#fff" stroke-width="0.8" stroke-opacity="1.0"/><circle cx="194.8" cy="246.0" r="18.6" fill="none" stroke="#fff" stroke-width="0.8" stroke-opacity="0.6"/><circle cx="328.5" cy="238.5" r="18.6" fill="none" stroke="#fff" stroke-width="0.8" stroke-opacity="0.85"/><circle cx="340.3" cy="246.3" r="18.3" fill="none" stroke="#fff" stroke-width="0.8" stroke-opacity="0.6"/>
</svg>
<div class="a zb" style="top:51.8px"></div>
<div class="a zb" style="top:62px"></div>
<svg class="a" style="left:33.3px;top:51.8px" width="8" height="18" viewBox="0 0 8 18"><path d="M3.7 1.6 V5.8 M1.6 3.7 H5.8" stroke="#fff" stroke-width="1.1"/><path d="M1.7 14 H5.7" stroke="#eee" stroke-width="1.1"/></svg>
<div class="a tbl"></div>
<div class="a hl" style="top:426.1px"></div>
<div class="a sl" style="top:446.1px"></div>
<div class="a sl" style="top:466.0px"></div>
<div class="a sl" style="top:485.8px"></div>
<div class="a sl" style="top:505.7px"></div>
<div class="a th" style="left:39.9px;top:413.0px">Country</div>
<div class="a th" style="left:140.3px;top:413.0px">Botnet</div>
<div class="a td" style="left:49.5px;top:432.3px">France</div>
<div class="a tg" style="left:140.3px;top:432.3px">wcrypt</div>
<div class="a td" style="left:49.7px;top:452.3px">United States</div>
<div class="a tg" style="left:140.3px;top:452.3px">wcrypt</div>
<div class="a td" style="left:49.7px;top:472.2px">Italy</div>
<div class="a tg" style="left:140.3px;top:472.2px">wcrypt</div>
<div class="a td" style="left:49.7px;top:492.0px">Canada</div>
<div class="a tg" style="left:140.3px;top:492.0px">wcrypt</div>
<div class="a td" style="left:49.7px;top:511.9px">Canada</div>
<div class="a tg" style="left:140.3px;top:511.9px">wcrypt</div>
<svg class="a" style="left:39.9px;top:433.7px" width="8" height="6" viewBox="0 0 8 6"><rect width="2.6" height="5.4" fill="#2a3f9a"/><rect x="2.6" width="2.6" height="5.4" fill="#f4f4f4"/><rect x="5.2" width="2.5" height="5.4" fill="#e03040"/></svg>
<svg class="a" style="left:39.9px;top:453.6px" width="8" height="6" viewBox="0 0 8 6"><rect width="7.7" height="5.4" fill="#eee"/><rect y="0" width="7.7" height="0.8" fill="#c8323c"/><rect y="1.5" width="7.7" height="0.8" fill="#c8323c"/><rect y="3" width="7.7" height="0.8" fill="#c8323c"/><rect y="4.5" width="7.7" height="0.9" fill="#c8323c"/><rect width="3.4" height="2.9" fill="#3b4a9a"/></svg>
<svg class="a" style="left:39.9px;top:473.7px" width="8" height="6" viewBox="0 0 8 6"><rect width="2.6" height="5.4" fill="#2e9a4a"/><rect x="2.6" width="2.6" height="5.4" fill="#f4f4f4"/><rect x="5.2" width="2.5" height="5.4" fill="#d8343c"/></svg>
<svg class="a" style="left:39.9px;top:493.5px" width="8" height="6" viewBox="0 0 8 6"><rect width="7.7" height="5.4" fill="#f2f2f2"/><rect width="2" height="5.4" fill="#d82c2c"/><rect x="5.7" width="2" height="5.4" fill="#d82c2c"/><path d="M3.85 1.2 L4.7 3.3 H3 Z M3.85 3.3 V4.4" fill="#d82c2c" stroke="#d82c2c" stroke-width="0.4"/></svg>
<svg class="a" style="left:39.9px;top:513.4px" width="8" height="6" viewBox="0 0 8 6"><rect width="7.7" height="5.4" fill="#f2f2f2"/><rect width="2" height="5.4" fill="#d82c2c"/><rect x="5.7" width="2" height="5.4" fill="#d82c2c"/><path d="M3.85 1.2 L4.7 3.3 H3 Z M3.85 3.3 V4.4" fill="#d82c2c" stroke="#d82c2c" stroke-width="0.4"/></svg>

</div>
</body></html>
